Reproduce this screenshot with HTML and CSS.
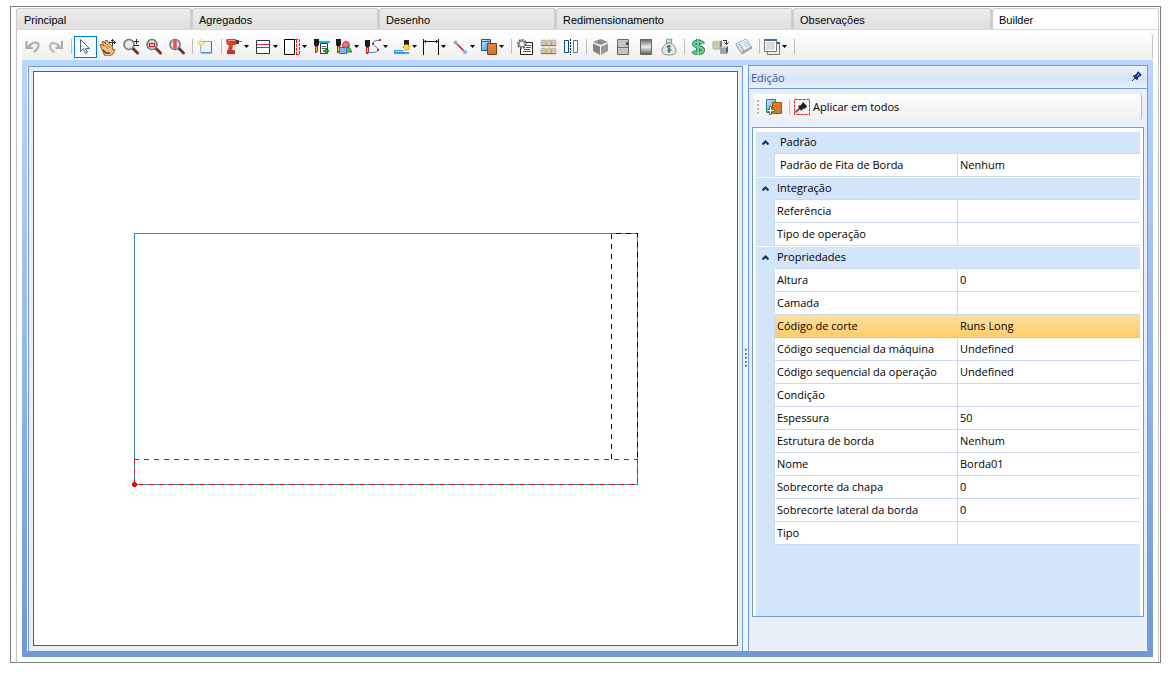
FILE: index.html
```
<!DOCTYPE html>
<html lang="pt-BR">

<head>
    <meta charset="UTF-8">
    <meta name="viewport" content="width=device-width, initial-scale=1.0">
    <title>Builder</title>
    <link rel="stylesheet" href="styles.css">
</head>

<body>
    <!-- shared symbols -->
    <svg class="defs" aria-hidden="true">
        <defs>
            <linearGradient id="metal" x1="0" y1="0" x2="0" y2="1">
                <stop offset="0" stop-color="#666" />
                <stop offset=".5" stop-color="#eee" />
                <stop offset="1" stop-color="#555" />
            </linearGradient>
            <linearGradient id="blueFill" x1="0" y1="0" x2="1" y2="1">
                <stop offset="0" stop-color="#d5ecff" />
                <stop offset="1" stop-color="#2e8be8" />
            </linearGradient>
            <linearGradient id="orangeFill" x1="0" y1="0" x2="0" y2="1">
                <stop offset="0" stop-color="#d98544" />
                <stop offset="1" stop-color="#c8783a" />
            </linearGradient>
            <symbol id="arrow" viewBox="0 0 5 3"><path d="M0 0h5L2.5 3z" /></symbol>
            <symbol id="lens" viewBox="0 0 18 18">
                <path d="M11 10.500l4.500 4.500" stroke="#6b3a22" stroke-width="3" stroke-linecap="round" />
                <circle cx="7" cy="6.500" r="5" fill="#dfe9ea" stroke="#6d7476" stroke-width="1.500" />
            </symbol>
            <symbol id="knife" viewBox="0 0 5 14">
                <path d="M0 0h5v6L4 7H1L0 6z" fill="#1b1b1b" />
                <path d="M1 7h3v5l-2 2H1z" fill="#e81010" />
                <path d="M2 8h1v4H2z" fill="#ffd21a" />
            </symbol>
        </defs>
    </svg>

    <div class="frame">
        <nav class="tabs">
            <button class="tab">Principal</button>
            <button class="tab">Agregados</button>
            <button class="tab">Desenho</button>
            <button class="tab">Redimensionamento</button>
            <button class="tab">Observações</button>
            <button class="tab active">Builder</button>
        </nav>

        <div class="page">
            <!-- main toolbar -->
            <div class="toolbar">
                <button class="tool" aria-label="Desfazer"><svg class="icon" viewBox="0 0 18 18" fill="none"><path d="M5 9c2-5 9-6 9.500-2 0 3-2 5-4.500 7" stroke="#b4b4b4" stroke-width="2.500" /><path d="M2.500 3v7H9" stroke="#a8a8a8" stroke-width="2" /><path d="M3 10l4-4" stroke="#b0b0b0" stroke-width="2" /></svg></button>
                <button class="tool" aria-label="Refazer"><svg class="icon" viewBox="0 0 18 18" fill="none"><path d="M12 9C10 4 3 4 3 8c0 3 2 5 4.500 6" stroke="#bdbdbd" stroke-width="2.500" /><path d="M15 3v7H8.500" stroke="#aaa" stroke-width="2" /><path d="M14 10l-4-4" stroke="#b4b4b4" stroke-width="2" /></svg></button>
                <span class="sep"></span>
                <button class="tool selected" aria-label="Selecionar"><svg class="icon" viewBox="0 0 18 18"><path d="M4.500 1.500v12l3-3 2 5 2-1-2-4h4z" fill="#fff" stroke="#4a648c" /></svg></button>
                <button class="tool" aria-label="Mover"><svg class="icon" viewBox="0 0 18 18"><path d="M1 7l1-1 3 2-2-4 1-1 3 3-1-3 2-1 3 4 2 2 1 4 1-1 1 1-2 4-4 2H6l-2-4z" fill="#edc285" stroke="#8a5a20" /><path d="M4 12l3 3h4" fill="none" stroke="#5e3a10" stroke-width="1.500" /><path d="M6 7l3 4M8 6l3 4" fill="none" stroke="#b77a32" /><path d="M13.500 1v7M10 4.500h7M12 2.500h3M15.500 3v3" fill="none" stroke="#333" /></svg></button>
                <button class="tool" aria-label="Zoom"><svg class="icon" viewBox="0 0 18 18"><use href="#lens" width="18" height="18" /><path d="M12 3.500h5M14.500 1v5M12 7.500h5" stroke="#222" /></svg></button>
                <button class="tool" aria-label="Zoom na janela"><svg class="icon" viewBox="0 0 18 18"><use href="#lens" width="18" height="18" /><path d="M4.500 5.500h5v3h-5z" fill="#fff" stroke="#c52f35" stroke-width="1.500" /></svg></button>
                <button class="tool" aria-label="Zoom total"><svg class="icon" viewBox="0 0 18 18"><use href="#lens" width="18" height="18" /><path d="M7 2l2 3H8v3h1l-2 3-2-3h1V5H5z" fill="#ec4c50" stroke="#ec4c50" /></svg></button>
                <span class="sep"></span>
                <button class="tool" aria-label="Novo"><svg class="icon" viewBox="0 0 18 18"><path d="M3.500 3.500h11v11h-11z" fill="#eaf5ff" stroke="#86aad0" /><path d="M14.500 3v12H4" fill="none" stroke="#3f70ad" /><path d="M4 1v8M0 5h8M1.500 2.500l5 5M6.500 2.500l-5 5" stroke="#efc93c" /><circle cx="4" cy="5" r="1.500" fill="#fff6b0" /></svg></button>
                <span class="sep"></span>
                <button class="tool drop" aria-label="Furação"><svg class="icon" viewBox="0 0 18 18"><path d="M0 2l1-1h9l1 2v3L9 7H7l-1 5H2l1-5H1z" fill="#e43b28" /><path d="M2 2h7v1H2z" fill="#ff8d77" /><path d="M10 2h3v4h-3z" fill="#444" /><path d="M13 3h3v1h-3z" fill="#777" /><path d="M1 12h7l1 1v3H1z" fill="#d9301f" /><path d="M1 15h8v1H1z" fill="#555" /></svg><svg class="arrow"><use href="#arrow" /></svg></button>
                <button class="tool drop" aria-label="Canal"><svg class="icon" viewBox="0 0 18 18"><path d="M1.500 2.500h13v13h-13z" fill="#fff" stroke="#333" /><path d="M2 6.500h12M2 9.500h12" stroke="#d81860" /></svg><svg class="arrow"><use href="#arrow" /></svg></button>
                <button class="tool drop" aria-label="Fita de borda"><svg class="icon" viewBox="0 0 18 18"><path d="M.5 1.500h10v15H.5z" fill="#fff" stroke="#000" /><path d="M11 1.500h4.500v15H11" fill="none" stroke="#f01818" stroke-dasharray="3 1" /><path d="M12.500 2v14" stroke="#f01818" stroke-dasharray="3 1" /></svg><svg class="arrow"><use href="#arrow" /></svg></button>
                <button class="tool" aria-label="Lista de usinagens"><svg class="icon" viewBox="0 0 18 18"><use href="#knife" x="1" y="1" width="5" height="14" /><path d="M6 3h11v2H6z" fill="#16b5ec" /><path d="M7.500 5.500h7v10h-7z" fill="#fff" stroke="#333" /><path d="M9 8.500h4M9 10.500h4" stroke="#555" /><path d="M13 10v6M10 13h6" stroke="#159a22" stroke-width="2" /></svg></button>
                <button class="tool drop" aria-label="Formas"><svg class="icon" viewBox="0 0 18 18"><use href="#knife" x="0" y="1" width="5" height="14" /><circle cx="10" cy="7" r="3.500" fill="#f06f7f" stroke="#c83c50" /><path d="M12 8l4 6H9z" fill="#52cd4b" stroke="#24782b" /><path d="M3.500 9.500h7v6h-7z" fill="#7ab8f5" stroke="#2873c4" /></svg><svg class="arrow"><use href="#arrow" /></svg></button>
                <button class="tool drop" aria-label="Caminho"><svg class="icon" viewBox="0 0 18 18"><use href="#knife" x="0" y="2" width="5" height="14" /><path d="M2 15c6-1 10 0 11-3S7 8 8 5s4-2 7-3" fill="none" stroke="#2676cf" /><path d="M14 1h2v2h-2zM7 5h2v2H7zM12 11h2v2h-2zM1 14h2v2H1z" fill="#e41212" /></svg><svg class="arrow"><use href="#arrow" /></svg></button>
                <button class="tool drop" aria-label="Rebaixo"><svg class="icon" viewBox="0 0 18 18"><path d="M0 12h9l1 2h5v2H0z" fill="#2f9cee" /><path d="M1 13h9v1H1z" fill="#9bd4ff" /><path d="M10 2h5v5h-5z" fill="#222" /><path d="M11 6.500h3l2 3-3.500 3.500L9 9.500z" fill="#ffdc1e" stroke="#d84312" stroke-dasharray="2 2" /></svg><svg class="arrow"><use href="#arrow" /></svg></button>
                <button class="tool drop" aria-label="Cota"><svg class="icon" viewBox="0 0 18 18"><path d="M.5 1v16M15.500 1v16M1 3.500h14M2.500 2v3M13.500 2v3" fill="none" stroke="#111" /></svg><svg class="arrow"><use href="#arrow" /></svg></button>
                <button class="tool drop" aria-label="Linha"><svg class="icon" viewBox="0 0 18 18"><path d="M4 5l9 9" stroke="#e02222" stroke-width="1.500" /><path d="M7 8l3 3" stroke="#333" /><circle cx="3.500" cy="4.500" r="2" fill="#7ab4f2" /><circle cx="13" cy="14" r="2" fill="#7ab4f2" /></svg><svg class="arrow"><use href="#arrow" /></svg></button>
                <button class="tool drop" aria-label="Agregar"><svg class="icon" viewBox="0 0 18 18"><path d="M.5 1.500h9v11h-9z" fill="url(#blueFill)" stroke="#145b9d" /><path d="M1 3.500h8" stroke="#1c74c4" /><path d="M6.500 5.500h9v11h-9z" fill="url(#orangeFill)" stroke="#853b06" /><path d="M7 8h8" stroke="#ff7a1a" stroke-width="2" /></svg><svg class="arrow"><use href="#arrow" /></svg></button>
                <span class="sep"></span>
                <button class="tool" aria-label="Propriedades"><svg class="icon" viewBox="0 0 18 18"><path d="M4.500 4.500h12v12h-12z" fill="#fff" stroke="#222" /><path d="M11 7.500h4M10 9.500h5M8 11.500h6M7 13.500h8" stroke="#555" /><circle cx="6" cy="6" r="4" fill="#eee" stroke="#666" stroke-width="2" stroke-dasharray="2 1" /><circle cx="6" cy="6" r="3" fill="#e4e4e4" stroke="#777" /><circle cx="6" cy="6" r="1" fill="#fff" /></svg></button>
                <button class="tool" aria-label="Materiais"><svg class="icon" viewBox="0 0 18 18"><path d="M2 3l1-1h3l1 1v5H2zM7.500 3l1-1h3l1 1v5h-5zM12.500 3l1-1h3l.5 1v5h-4.500zM2 11l1-1h3l1 1v5H2zM7.500 11l1-1h3l1 1v5h-5zM12.500 11l1-1h3l.5 1v5h-4.500z" fill="#d9c6ab" stroke="#ad957b" stroke-width=".5" /><path d="M2 7.500h15M2 15.500h15" stroke="#97785a" /></svg></button>
                <button class="tool" aria-label="Espelhar"><svg class="icon" viewBox="0 0 18 18"><path d="M2.500 2.500h4v12h-4z" fill="#fff" stroke="#0b4a80" /><path d="M11.500 2.500h4v12h-4z" fill="#fff" stroke="#168ce8" /><path d="M8.500 1v16" stroke="#222" stroke-dasharray="2 1" /></svg></button>
                <span class="sep"></span>
                <button class="tool" aria-label="Vista 3D"><svg class="icon" viewBox="0 0 18 18"><path d="M9.500 1L17 4l-7.500 3L2 4z" fill="#909090" /><path d="M2 5.500l7 3V17l-7-4z" fill="#828282" /><path d="M17 5.500l-7 3V17l7-4z" fill="#9a9a9a" /></svg></button>
                <button class="tool" aria-label="Vista frontal"><svg class="icon" viewBox="0 0 18 18"><path d="M3.500 1.500h11v15h-11z" fill="#c4c4c4" stroke="#666" /><path d="M4 9.500h10" stroke="#6d6d6d" /><path d="M12 4h2v3h-2z" fill="#555" /></svg></button>
                <button class="tool" aria-label="Acabamento"><svg class="icon" viewBox="0 0 18 18"><path d="M3.500 1.500h11v15h-11z" fill="url(#metal)" stroke="#666" /></svg></button>
                <button class="tool" aria-label="Custo"><svg class="icon" viewBox="0 0 18 18"><path d="M6 2l2-1 2 1 2-1-1 4c3 2 5 5 5 8 0 3-3 4-7 4s-7-1-7-4c0-3 2-6 5-8z" fill="#e1e7e7" stroke="#82908f" /><path d="M6 5h5" stroke="#71807f" /><path d="M11 8.500c-1-1-4-1-4 .5s4 1.500 4 3-3 1.500-4 .5M9 7v8" fill="none" stroke="#315b60" /></svg></button>
                <span class="sep"></span>
                <button class="tool" aria-label="Preço"><svg class="icon" viewBox="0 0 18 18" fill="none"><path d="M14 6c-1-3-9-3-9 0s9 2.500 9 6-8 4-10 1M9 1v16" stroke="#2c8551" stroke-width="4" /><path d="M14 6c-1-3-9-3-9 0s9 2.500 9 6-8 4-10 1M9 1v16" stroke="#70d39b" stroke-width="2" /></svg></button>
                <button class="tool" aria-label="Substituir módulo"><svg class="icon" viewBox="0 0 18 18"><path d="M1 4l3-2h6L8 4z" fill="#e4eed6" /><path d="M1 4h7v7H1z" fill="#c3d2b1" stroke="#a3b291" /><path d="M8 4l2-2v7l-2 2z" fill="#71815e" /><path d="M8 10l2-2h6l-2 2z" fill="#cad3da" /><path d="M8 10h6v6H8z" fill="#9aa6b0" /><path d="M14 10l2-2v6l-2 2z" fill="#53606c" /><path d="M11 2.500h3.500V6M12.500 4.500l2 2 2-2" fill="none" stroke="#333" /></svg></button>
                <button class="tool" aria-label="Relatório"><svg class="icon" viewBox="0 0 18 18"><path d="M1 7l10-5 6 8-10 6z" fill="#b7b7b7" stroke="#999" /><path d="M1 6l10-5 5 8-10 5z" fill="#f7f7f7" stroke="#aaa" /><path d="M4 6l5 7" stroke="#4695e5" stroke-dasharray="1 1" stroke-width="2" /><path d="M8 5l3-1M9 7l4-2M10 9l4-2" stroke="#a7b6c5" /></svg></button>
                <span class="sep"></span>
                <button class="tool drop" aria-label="Janelas"><svg class="icon" viewBox="0 0 18 18"><path d="M3.500 4.500h12v12h-12z" fill="#eee" stroke="#777" /><path d="M12 4h4v2h-4z" fill="#2463b5" /><path d="M.5 1.500h12v12H.5z" fill="#fff" stroke="#777" /><path d="M0 1h13v2H0z" fill="#3d6fad" /><path d="M2 4h9v8H2z" fill="#ddd" /></svg><svg class="arrow"><use href="#arrow" /></svg></button>
                <span class="sep"></span>
            </div>

            <div class="workspace">
                <!-- drawing area -->
                <div class="pane">
                    <div class="canvas">
                        <svg class="drawing" viewBox="0 0 504 252" fill="none">
                            <path d="M.5.5h503v251H.5z" stroke="#4682b4" />
                            <path d="M477.500 226V.5h26V226" stroke="#000" stroke-dasharray="5 5" />
                            <path d="M0 226.500h504" stroke="#f00" stroke-dasharray="5 5" />
                            <path d="M.5 226v25.500h503V226" stroke="#f00" stroke-dasharray="5 5" />
                            <circle cx=".5" cy="251.500" r="2.500" fill="#f00" />
                        </svg>
                    </div>
                </div>

                <div class="splitter"><i></i><i></i><i></i><i></i><i></i></div>

                <!-- edit panel -->
                <section class="panel">
                    <header class="panel-header">
                        <span>Edição</span>
                        <button class="pin" aria-label="Fixar painel"><svg viewBox="0 0 12 12"><path d="M6.500 1L10 4.500" stroke="#12387c" stroke-width="2" /><path d="M8 3L5 6" stroke="#12387c" stroke-width="4" /><path d="M8 3L6 5" stroke="#b6cdf0" /><path d="M2.500 4.500l4 4" stroke="#12387c" stroke-width="2" /><path d="M4 7l-3 3" stroke="#12387c" /></svg></button>
                    </header>

                    <div class="panel-toolbar">
                        <span class="grip"></span>
                        <button class="panel-tool" aria-label="Adicionar"><svg class="icon" viewBox="0 0 18 18"><path d="M1.500 1.500h9v13h-9z" fill="url(#blueFill)" stroke="#2676b7" /><path d="M7.500 4.500h9v11h-9z" fill="url(#orangeFill)" stroke="#9b5515" /><path d="M8 8h8" stroke="#ff6a00" stroke-width="2" /><path d="M4.500 8.500h2v3h3v2h-3v3h-2v-3h-3v-2h3z" fill="#fff" stroke="#26951f" /></svg></button>
                        <span class="sep"></span>
                        <button class="panel-tool"><svg class="icon" viewBox="0 0 18 18"><path d="M1.500 1.500h15v15h-15z" fill="#f6f6f6" stroke="#f01818" stroke-dasharray="3 1" /><path d="M10 4l4 4-1 2-3 1-2 2-1-2-4 4-1-1 4-4-1-2 3-1z" fill="#222" /><path d="M4 12l-2 3" stroke="#888" /></svg>Aplicar em todos</button>
                    </div>

                    <div class="grid-box">
                        <table class="props">
                            <colgroup><col class="col-gutter"><col><col></colgroup>
                            <tbody class="wide">
                                <tr class="category"><td><button aria-label="Recolher Padrão"><svg viewBox="0 0 7 5"><path d="M.5 4.500l3-3 3 3" /></svg></button></td><th colspan="2">Padrão</th></tr>
                                <tr><td></td><th>Padrão de Fita de Borda</th><td>Nenhum</td></tr>
                            </tbody>
                            <tbody>
                                <tr class="category"><td><button aria-label="Recolher Integração"><svg viewBox="0 0 7 5"><path d="M.5 4.500l3-3 3 3" /></svg></button></td><th colspan="2">Integração</th></tr>
                                <tr><td></td><th>Referência</th><td></td></tr>
                                <tr><td></td><th>Tipo de operação</th><td></td></tr>
                            </tbody>
                            <tbody>
                                <tr class="category"><td><button aria-label="Recolher Propriedades"><svg viewBox="0 0 7 5"><path d="M.5 4.500l3-3 3 3" /></svg></button></td><th colspan="2">Propriedades</th></tr>
                                <tr><td></td><th>Altura</th><td>0</td></tr>
                                <tr><td></td><th>Camada</th><td></td></tr>
                                <tr class="current"><td></td><th>Código de corte</th><td>Runs Long</td></tr>
                                <tr><td></td><th>Código sequencial da máquina</th><td>Undefined</td></tr>
                                <tr><td></td><th>Código sequencial da operação</th><td>Undefined</td></tr>
                                <tr><td></td><th>Condição</th><td></td></tr>
                                <tr><td></td><th>Espessura</th><td>50</td></tr>
                                <tr><td></td><th>Estrutura de borda</th><td>Nenhum</td></tr>
                                <tr><td></td><th>Nome</th><td>Borda01</td></tr>
                                <tr><td></td><th>Sobrecorte da chapa</th><td>0</td></tr>
                                <tr><td></td><th>Sobrecorte lateral da borda</th><td>0</td></tr>
                                <tr><td></td><th>Tipo</th><td></td></tr>
                            </tbody>
                        </table>
                        <div class="grid-rest"></div>
                    </div>
                </section>
            </div>
        </div>
    </div>
</body>

</html>
```
FILE: styles.css
```
* {
    box-sizing: border-box;
}

body {
    display: flex;
    min-height: 100vh;
    margin: 0;
    padding: 6px 9px 12px 10px;
    background: #fff;
    color: #000;
    font-family: "Open Sans", "Noto Sans", sans-serif;
    font-size: 11px;
}

button {
    margin: 0;
    padding: 0;
    border: 0;
    background: none;
    color: inherit;
    font: inherit;
}

svg {
    display: block;
}

.defs {
    position: absolute;
    width: 0;
    height: 0;
}

.frame {
    flex: 1;
    display: flex;
    flex-direction: column;
    min-width: 0;
    padding: 1px 1px 0 5px;
    border: 1px solid #808080;
}

/* tabs */
.tabs {
    display: grid;
    grid-template-columns: 176fr 187fr 177fr 237fr 199fr 167fr;
    height: 21px;
}

.tab {
    padding: 2px 6px 0;
    border: 1px solid #cdcdcd;
    border-width: 1px 2px 0 1px;
    border-radius: 3px 3px 0 0;
    background: linear-gradient(#ececec, #e0e0e0);
    font-family: "Liberation Sans", Arial, sans-serif;
    font-size: 11px;
    text-align: left;
}

.tab:first-child {
    padding-left: 7px;
}

.tab.active {
    background: #fff;
    border-right-width: 1px;
}

.page {
    flex: 1;
    display: flex;
    flex-direction: column;
    padding: 3px 5px 5px;
    border: 1px solid #c4c4c4;
    border-top-color: #dadada;
    border-bottom: 0;
}

/* toolbar */
.toolbar {
    display: flex;
    align-items: center;
    height: 27px;
    border-right: 1px solid #c8c8c8;
    border-radius: 3px;
    background: linear-gradient(#fefefe, #efefef);
}

.tool {
    display: flex;
    align-items: center;
    width: 23px;
    height: 22px;
    padding-left: 2px;
}

.tool.drop {
    width: 29px;
}

.tool.selected {
    padding-left: 1px;
    border: 1px solid #0078d7;
    background: #f6fafe;
}

.icon {
    flex: none;
    width: 18px;
    height: 18px;
}

.arrow {
    flex: none;
    width: 5px;
    height: 3px;
}

.sep {
    width: 6px;
    height: 15px;
    background: linear-gradient(#bdbdbd, #bdbdbd) 3px 0 / 1px 100% no-repeat;
}

/* workspace */
.workspace {
    flex: 1;
    display: flex;
    padding: 5px 5px 6px 6px;
    background: linear-gradient(#bad6ff, #6f98d5);
}

.pane {
    flex: 1;
    display: flex;
    margin-top: 1px;
    padding: 4px;
    border: 1px solid #6f9bd8;
    border-bottom: 0;
    background: #e8eff9;
    box-shadow: -1px 0 #fff;
}

.canvas {
    flex: 1;
    display: flex;
    align-items: center;
    justify-content: center;
    margin-bottom: 1px;
    border: 1px solid #5c5f66;
    background: #fff;
}

.drawing {
    width: 504px;
    height: 252px;
    overflow: visible;
    shape-rendering: crispEdges;
}

.splitter {
    display: flex;
    flex-direction: column;
    align-items: center;
    justify-content: center;
    gap: 2px;
    width: 5px;
    background: #edf4fe;
}

.splitter i {
    width: 2px;
    height: 2px;
    background: linear-gradient(135deg, #edf4fe 25%, #2f6fc4 25% 75%, #edf4fe 75%);
}

/* edit panel */
.panel {
    display: flex;
    flex-direction: column;
    width: 400px;
    border: 1px solid #6f9bd8;
    border-bottom-color: #fff;
    background: #e8eff9;
}

.panel-header {
    display: flex;
    align-items: center;
    justify-content: space-between;
    height: 23px;
    padding: 0 4px 0 2px;
    border-bottom: 1px solid #6f9bd8;
    background: linear-gradient(#ecf2fb, #d8e5f6 60%, #e7f0fb);
    color: #3456a0;
    line-height: 21px;
}

.pin svg {
    width: 12px;
    height: 12px;
}

.panel-toolbar {
    display: flex;
    align-items: center;
    height: 26px;
    margin: 5px 5px 7px;
    border-right: 1px solid #b8b8b8;
    border-radius: 3px;
    background: linear-gradient(#fdfdfd, #f0f0f0);
}

.grip {
    width: 2px;
    height: 14px;
    margin: 0 6px 0 3px;
    background: repeating-linear-gradient(#b8b8b8 0 2px, transparent 2px 4px);
}

.panel-tool {
    display: flex;
    align-items: center;
    gap: 2px;
    line-height: 16px;
}

.panel-tool + .sep {
    margin: 0 1px 0 3px;
}

.grid-box {
    flex: 1;
    display: flex;
    flex-direction: column;
    margin: 0 3px 33px;
    padding: 3px 3px 0;
    border: 1px solid #6f9bd8;
    background: #fff;
}

.grid-rest {
    flex: 1;
    background: #d3e5fb;
}

/* property grid */
.props {
    width: 100%;
    table-layout: fixed;
    border-spacing: 0;
}

.col-gutter {
    width: 18px;
}

.props th,
.props td {
    height: 23px;
    padding: 0 2px;
    border-bottom: 1px solid #cbdcf2;
    border-left: 1px solid #cbdcf2;
    line-height: 22px;
    font-weight: normal;
    text-align: left;
    white-space: nowrap;
}

.props .wide th {
    padding-left: 5px;
}

.props td:first-child {
    padding: 0;
    border: 0;
    background: #d3e5fb;
}

.props .category th {
    border-left-color: #d3e5fb;
    background: #d3e5fb;
}

.props .category th,
.props .category td:first-child {
    border-top: 1px solid #fff;
    padding-bottom: 1px;
    line-height: 20px;
}

.props button {
    display: block;
    margin: auto;
}

.props button svg {
    width: 7px;
    height: 5px;
    fill: none;
    stroke: #12305f;
    stroke-width: 2;
}

.props .current th,
.props .current td:last-child {
    border-bottom-color: #f3bd66;
    background: linear-gradient(#ffe0a0, #fecd69);
}
```
